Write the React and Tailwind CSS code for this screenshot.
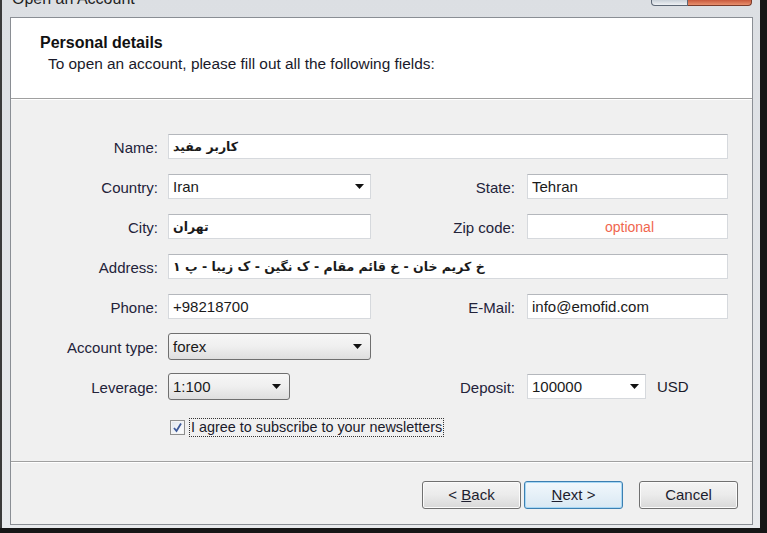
import React from "react";

const font = { fontFamily: '"Liberation Sans", Arial, sans-serif' };
const fa = { fontFamily: '"DejaVu Sans", "Liberation Sans", sans-serif' };

function Arrow() {
    return (
        <svg width="9" height="5" viewBox="0 0 9 5" className="shrink-0">
            <path d="M0 0 L9 0 L4.5 5 Z" fill="#111" />
        </svg>
    );
}

function Label({ w = "w-[147px]", children }) {
    return <div className={`${w} text-right text-[15px] text-[#23233a] leading-none pt-[2px] shrink-0`}>{children}</div>;
}

function Field({ w, children, className = "" }) {
    return (
        <div className={`${w} h-[25px] bg-white border border-[#d6d9dd] border-t-[#b4b7bc] flex items-center pl-[4px] pt-[2px] text-[15px] text-[#1a1a1a] shrink-0 ${className}`}>
            {children}
        </div>
    );
}

function Combo({ w, value, flat }) {
    if (flat) {
        return (
            <div className={`${w} h-[25px] bg-white border border-[#d6d9dd] border-t-[#b4b7bc] flex items-center justify-between pl-[4px] pr-[6px] text-[15px] text-[#1a1a1a] shrink-0`}>
                <span className="pt-[2px]">{value}</span>
                <Arrow />
            </div>
        );
    }
    return (
        <div className={`${w} h-[27px] rounded-[3px] border border-[#6f6f6f] bg-gradient-to-b from-[#f7f7f7] via-[#efefef] to-[#dedede] flex items-center justify-between pl-[4px] pr-[8px] text-[15px] text-[#1a1a1a] shrink-0`}>
            <span className="pt-[2px]">{value}</span>
            <Arrow />
        </div>
    );
}

function Btn({ children, focused }) {
    return (
        <div className={`w-[99px] h-[28px] rounded-[3px] border flex items-center justify-center text-[15px] text-[#1d1d2e] ${focused ? "border-[#3c7fb1] bg-gradient-to-b from-[#f2f8fc] to-[#d9e8f3] shadow-[inset_0_0_0_1px_#a8d8f5]" : "border-[#707070] bg-gradient-to-b from-[#f4f4f4] via-[#ebebeb] to-[#d8d8d8] shadow-[inset_0_0_0_1px_#fbfbfb]"}`}>
            {children}
        </div>
    );
}

export default function App() {
    return (
        <div className="w-[767px] h-[533px] bg-[#161616] overflow-hidden" style={font}>
            <div className="w-[760px] h-[528px] bg-gradient-to-b from-[#dcdfe3] to-[#e8eaed] flex flex-col border-l-[2px] border-[#3a3a3a]">
                {/* title bar */}
                <div className="h-[17px] flex justify-between items-start overflow-hidden pl-[10px] pr-[8px]">
                    <div className="text-[16px] text-[#1e1e1e] leading-none -mt-[9px]">Open an Account</div>
                    <div className="flex">
                        <div className="w-[37px] h-[6px] rounded-bl-[4px] border border-t-0 border-[#5d6775] bg-gradient-to-b from-[#c9d0d8] to-[#eef1f4]" />
                        <div className="w-[64px] h-[6px] rounded-br-[4px] border border-t-0 border-l-0 border-[#7a3b2b] bg-gradient-to-b from-[#c8593c] to-[#e8906e]" />
                    </div>
                </div>

                {/* content box */}
                <div className="ml-[8px] w-[743px] h-[508px] border border-[#8a8e94] bg-[#f0f0f0] flex flex-col">
                    <div className="h-[81px] bg-white border-b border-[#a0a0a0] shadow-[0_1px_0_#ffffff] pl-[29px] pt-[16px]">
                        <div className="text-[16px] font-bold text-[#111] leading-[17px]">Personal details</div>
                        <div className="text-[15.4px] text-[#1a1a2a] leading-[17px] mt-[4px] ml-[8px]">To open an account, please fill out all the following fields:</div>
                    </div>

                    <div className="flex-1 pt-[35px] flex flex-col">
                        <div className="flex flex-col gap-[15px]">
                            <div className="flex items-center">
                                <Label>Name:</Label>
                                <Field w="w-[560px]" className="ml-[10px]"><span className="font-bold text-[12.5px]" style={fa}>کاربر مفید</span></Field>
                            </div>
                            <div className="flex items-center">
                                <Label>Country:</Label>
                                <div className="ml-[10px]"><Combo w="w-[203px]" value="Iran" flat /></div>
                                <Label w="w-[144px]">State:</Label>
                                <Field w="w-[201px]" className="ml-[12px]">Tehran</Field>
                            </div>
                            <div className="flex items-center">
                                <Label>City:</Label>
                                <Field w="w-[203px]" className="ml-[10px]"><span className="font-bold text-[12.5px]" style={fa}>تهران</span></Field>
                                <Label w="w-[144px]">Zip code:</Label>
                                <Field w="w-[201px]" className="ml-[12px] justify-center pl-0"><span className="text-[14px] text-[#f0664e]">optional</span></Field>
                            </div>
                            <div className="flex items-center">
                                <Label>Address:</Label>
                                <Field w="w-[560px]" className="ml-[10px]"><span className="font-bold text-[12.5px]" style={fa}>خ کریم خان - خ قائم مقام - ک نگین - ک زیبا - پ ۱</span></Field>
                            </div>
                            <div className="flex items-center">
                                <Label>Phone:</Label>
                                <Field w="w-[203px]" className="ml-[10px]">+98218700</Field>
                                <Label w="w-[144px]">E-Mail:</Label>
                                <Field w="w-[201px]" className="ml-[12px]">info@emofid.com</Field>
                            </div>
                            <div className="flex items-center h-[25px]">
                                <Label>Account type:</Label>
                                <div className="ml-[10px]"><Combo w="w-[203px]" value="forex" /></div>
                            </div>
                            <div className="flex items-center h-[25px]">
                                <Label>Leverage:</Label>
                                <div className="ml-[10px] w-[203px]"><Combo w="w-[122px]" value="1:100" /></div>
                                <Label w="w-[144px]">Deposit:</Label>
                                <div className="ml-[12px]"><Combo w="w-[119px]" value="100000" flat /></div>
                                <div className="ml-[11px] pt-[2px] text-[15px] text-[#1a1a2a]">USD</div>
                            </div>
                        </div>

                        <div className="flex items-center pl-[159px] mt-[19px]">
                            <div className="w-[15px] h-[15px] border border-[#8e8f8f] bg-gradient-to-br from-[#dfe6ee] to-[#ffffff] flex items-center justify-center shadow-[inset_0_0_0_1px_#f4f4f4]">
                                <svg width="11" height="11" viewBox="0 0 11 11">
                                    <path d="M2 6 L4.5 9 L9 1.5" fill="none" stroke="#3e5a9a" strokeWidth="1.8" />
                                </svg>
                            </div>
                            <div className="ml-[4px] border border-dotted border-[#333] px-[1px] h-[19px] flex items-center pt-[1px] text-[14.4px] text-[#1a1a2a]">I agree to subscribe to your newsletters</div>
                        </div>
                    </div>

                    <div className="h-[63px] border-t border-[#a0a0a0] shadow-[inset_0_1px_0_#ffffff] flex justify-end items-start pt-[19px] pr-[14px]">
                        <div className="flex gap-[3px]">
                            <Btn>&lt;&nbsp;<span className="underline">B</span>ack</Btn>
                            <Btn focused><span className="underline">N</span>ext&nbsp;&gt;</Btn>
                        </div>
                        <div className="ml-[16px]"><Btn>Cancel</Btn></div>
                    </div>
                </div>
            </div>
        </div>
    );
}
